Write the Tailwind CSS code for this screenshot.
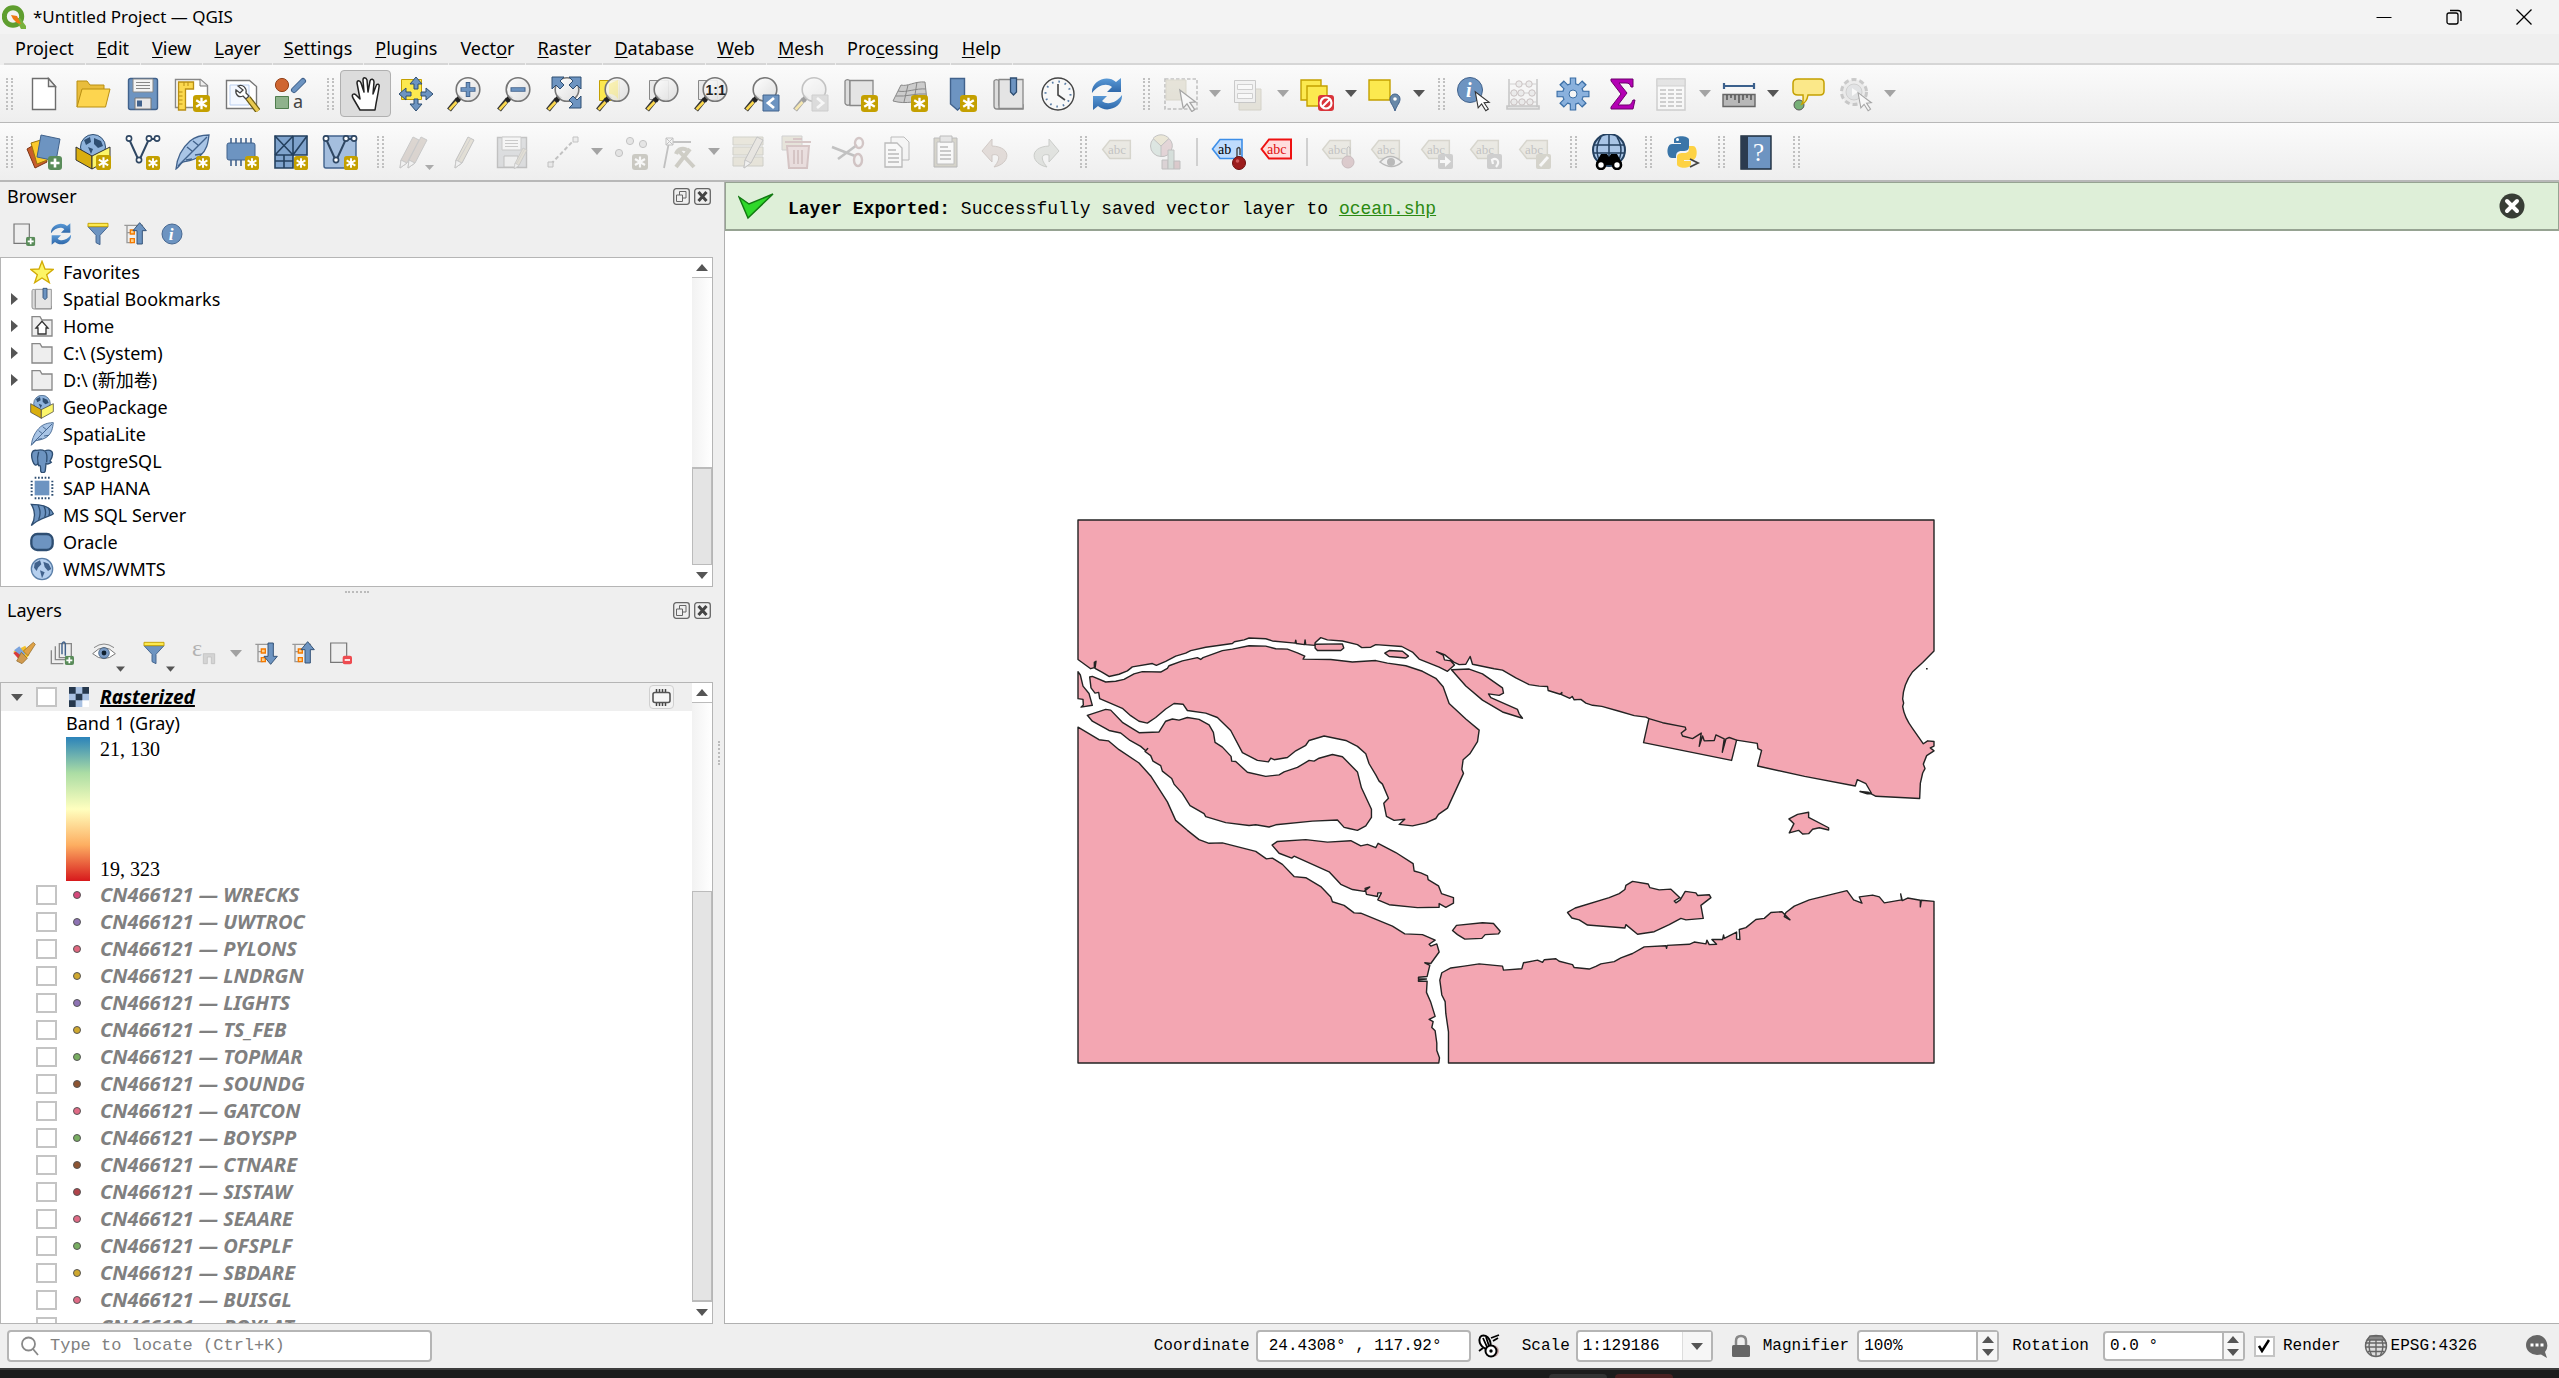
<!DOCTYPE html>
<html lang="en">
<head>
<meta charset="utf-8">
<title>*Untitled Project — QGIS</title>
<script src="https://cdn.jsdelivr.net/npm/@tailwindcss/browser@4"></script>
</head>
<body class="h-screen flex flex-col overflow-hidden bg-[#efefef] text-black text-[18px] leading-6 font-['Noto_Sans','Noto_Sans_CJK_SC',sans-serif]">

<!-- Shared icon shapes, drawn on a 36 by 36 grid -->
<svg class="absolute w-0 h-0" aria-hidden="true">
<defs>
<linearGradient id="gLens" x1="0" y1="0" x2="1" y2="1"><stop offset="0" stop-color="#fff"/><stop offset="1" stop-color="#dcdcdc"/></linearGradient>
<linearGradient id="gRamp" x1="0" y1="0" x2="0" y2="1"><stop offset="0" stop-color="#5b9bd8"/><stop offset="1" stop-color="#2d66a8"/></linearGradient>
<symbol id="badge" viewBox="0 0 16 16"><rect width="16" height="16" rx="3" fill="#c4a000"/><path d="M8 2.500V13.500M3 5l10 6M13 5L3 11" stroke="#fff" stroke-width="2.200"/></symbol>
<symbol id="plus" viewBox="0 0 14 14"><rect width="14" height="14" rx="3" fill="#5a8c5a"/><path d="M7 2.500v9M2.500 7h9" stroke="#fff" stroke-width="2.600"/></symbol>
<symbol id="lens" viewBox="0 0 36 36"><path d="M11 23L2 34" stroke="#333" stroke-width="5"/><path d="M9.500 26L2.500 33.500" stroke="#fcd94f" stroke-width="2.600"/><path d="M14 20l-4 5" stroke="#222" stroke-width="5"/><circle cx="21" cy="13.500" r="11.800" fill="url(#gLens)" fill-opacity=".9" stroke="#777" stroke-width="1.600"/></symbol>
<symbol id="cursor" viewBox="0 0 20 26"><path d="M2 2l3.500 19 4-4.500 5 8 3-2-5-7.500 6-.5z" fill="#fff" stroke="#333" stroke-width="1.300"/></symbol>
<symbol id="tag" viewBox="0 0 32 22"><path d="M1.500 11L9 1.500h21.500v19H9z" fill="#d9d6c8" stroke="#aaa793" stroke-width="1.500"/></symbol>

<symbol id="new" viewBox="0 0 36 36"><path d="M6.500 2.500h16l7 8v23h-23z" fill="#fff" stroke="#6d6d6d" stroke-width="1.400"/><path d="M22.500 2.500v8h7z" fill="#eee" stroke="#6d6d6d" stroke-width="1.400"/></symbol>
<symbol id="open" viewBox="0 0 36 36"><path d="M2 31V5h10l3 4h14v5" fill="#e9bd3c" stroke="#b98f13"/><path d="M2 31L7 13h28l-4.500 18z" fill="#fdd54f" stroke="#b98f13"/></symbol>
<symbol id="save" viewBox="0 0 36 36"><path d="M3.500 4.500a2 2 0 012-2h25a2 2 0 012 2v27a2 2 0 01-2 2h-25a2 2 0 01-2-2z" fill="#6d94c1" stroke="#41628c" stroke-width="1.400"/><path d="M8 3h20v13H8z" fill="#f4f4f4" stroke="#888"/><path d="M11 6.500h14M11 9.500h14M11 12.500h14" stroke="#888"/><path d="M10 22h16v11H10z" fill="#e8e8e8" stroke="#777"/><path d="M12 24.500h5v6h-5z" fill="#41628c"/></symbol>
<symbol id="layout" viewBox="0 0 36 36"><path d="M1.500 3.500h25l7 6v22h-32z" fill="#fff" stroke="#888" stroke-width="1.400"/><path d="M26 3.500v6.500h7" fill="#eee" stroke="#777"/><path d="M4.500 6h15v7h-8v21h-7z" fill="#fcd94f" stroke="#b98f13" stroke-width="1.300"/><path d="M4.500 16h4M4.500 20h4M4.500 24h4M4.500 28h4M10 6v4M14 6v4" stroke="#b98f13"/><use href="#badge" x="19" y="19" width="17" height="17"/></symbol>
<symbol id="layoutmgr" viewBox="0 0 36 36"><path d="M2.500 4.500h23l7 6v22h-30z" fill="#fff" stroke="#777" stroke-width="1.400"/><path d="M6 9h19v20H6z" fill="#f4f8ff" stroke="#bcd0f0"/><path d="M14 10c5-2 9 2 8 7l3 3-3 3-3-3c-4 2-8-1-7-6l4 3 3-3z" fill="#fff" stroke="#444" stroke-width="1.300"/><path d="M24 22l10 13" stroke="#6b5a12" stroke-width="6"/><path d="M24 22l10 13" stroke="#e8c850" stroke-width="3.600"/></symbol>
<symbol id="style" viewBox="0 0 36 36"><circle cx="9" cy="9" r="6.600" fill="#cf6530" stroke="#94431c"/><path d="M21 14L30 5" stroke="#41628c" stroke-width="6" stroke-linecap="round"/><path d="M21 14L30 5" stroke="#6d94c1" stroke-width="4" stroke-linecap="round"/><path d="M2.500 20.500h13v12h-13z" fill="#8fb28c" stroke="#4f7d4d"/><text x="20" y="32" font-size="18" font-family="Noto Sans" fill="#444">a</text></symbol>
<symbol id="hand" viewBox="0 0 36 36"><path d="M12 34L5 22c-2-4 1-5 3-3l4 4L9 7c0-3 3-3 4 0l3 9-1-12c0-3 3-3 4 0l1 12 2-11c1-3 4-2 4 1l-1 12 3-8c1-3 4-2 3 1-1 8-2 10-4 23z" fill="#fff" stroke="#222" stroke-width="1.500" stroke-linejoin="round"/></symbol>
<symbol id="panarrows" viewBox="0 0 36 36"><path d="M3.500 3.500h20v20h-20z" fill="#fce94f" stroke="#c4a000"/><path d="M18 1l6 7h-4v5h-4V8h-4zM18 35l6-7h-4v-5h-4v5h-4zM1 18l7-6v4h5v4H8v4zM35 18l-7-6v4h-5v4h5v4z" fill="#6d94c1" stroke="#2e4e72" stroke-linejoin="round"/></symbol>
<symbol id="zin" viewBox="0 0 36 36"><use href="#lens"/><path d="M21 6v15M13.500 13.500h15" stroke="#41628c" stroke-width="4.500"/><path d="M21 7v13M14.500 13.500h13" stroke="#6d94c1" stroke-width="2.800"/></symbol>
<symbol id="zout" viewBox="0 0 36 36"><use href="#lens"/><path d="M13.500 13.500h15" stroke="#41628c" stroke-width="4.500"/><path d="M14.500 13.500h13" stroke="#6d94c1" stroke-width="2.800"/></symbol>
<symbol id="zfull" viewBox="0 0 36 36"><use href="#lens"/><path d="M6 1h12l-4 4 4 4-4 4-4-4-4 4zM35 1v12l-4-4-4 4-4-4 4-4-4-4zM35 32H23l4-4-4-4 4-4 4 4 4-4z" fill="#6d94c1" stroke="#2e4e72"/></symbol>
<symbol id="zsel" viewBox="0 0 36 36"><path d="M3.500 4.500h20v20h-20z" fill="#fce94f" stroke="#c4a000"/><use href="#lens"/><path d="M22 4v19A10 10 0 0013 18V8z" fill="#fce94f" opacity=".35"/></symbol>
<symbol id="zlayer" viewBox="0 0 36 36"><path d="M4.500 4.500h19v19h-19z" fill="#e8e8e8" stroke="#888"/><use href="#lens"/></symbol>
<symbol id="z11" viewBox="0 0 36 36"><path d="M4.500 4.500h19v19h-19z" fill="#e8e8e8" stroke="#888"/><use href="#lens"/><text x="11.500" y="19" font-size="14" font-weight="bold" font-family="Liberation Sans" fill="#222">1:1</text></symbol>
<symbol id="zlast" viewBox="0 0 36 36"><use href="#lens"/><path d="M19 19h16v16H19z" fill="#6d94c1" stroke="#41628c"/><path d="M30 22l-6 5 6 5" fill="none" stroke="#fff" stroke-width="2.800"/></symbol>
<symbol id="znext" viewBox="0 0 36 36"><use href="#lens"/><path d="M19 19h16v16H19z" fill="#bbb" stroke="#999"/><path d="M24 22l6 5-6 5" fill="none" stroke="#fff" stroke-width="2.800"/></symbol>
<symbol id="map2d" viewBox="0 0 36 36"><path d="M3 5a3 3 0 015 0v24h-1a3 3 0 01-4-2z" fill="#ddd" stroke="#888" stroke-width="1.300"/><path d="M8 4.500h23v25H8z" fill="#e4e4e4" stroke="#888" stroke-width="1.300"/><use href="#badge" x="19" y="19" width="17" height="17"/></symbol>
<symbol id="map3d" viewBox="0 0 36 36"><path d="M9 9c6 2 14-4 24-3l2 19c-10-1-20 4-34 0z" fill="#ccc" stroke="#888"/><path d="M6 15c8 2 18-3 28-2M4 20c10 1 20-3 30-2M16 9L12 26M25 6l-3 19" stroke="#888" fill="none"/><use href="#badge" x="19" y="19" width="17" height="17"/></symbol>
<symbol id="bmnew" viewBox="0 0 36 36"><path d="M9.500 2.500h14V28l-7 6-7-6z" fill="#6d94c1" stroke="#41628c" stroke-width="1.400"/><use href="#badge" x="19" y="19" width="17" height="17"/></symbol>
<symbol id="bm" viewBox="0 0 36 36"><path d="M3 5a3 3 0 015 0v24h24v4H6a3 3 0 01-3-3z" fill="#ddd" stroke="#888" stroke-width="1.300"/><path d="M8 3.500h24v29H8z" fill="#e4e4e4" stroke="#888" stroke-width="1.300"/><path d="M19.500 2h6v14l-3 3-3-3z" fill="#6d94c1" stroke="#2e4e72" stroke-width="1.300"/></symbol>
<symbol id="clock" viewBox="0 0 36 36"><circle cx="18" cy="18" r="16" fill="#f8f8f8" stroke="#444" stroke-width="1.400"/><circle cx="18" cy="18" r="12.500" fill="none" stroke="#5b7fa8" stroke-width="2" stroke-dasharray="1.600 4.945"/><path d="M18 8v11l7 5" fill="none" stroke="#444" stroke-width="1.600"/></symbol>
<symbol id="refresh" viewBox="0 0 36 36"><path d="M3 17C2 5 18-2 27 6l5-4v14H18l5-5c-6-5-15-1-20 6z" fill="url(#gRamp)"/><path d="M33 19c1 12-15 19-24 11l-5 4V20h14l-5 5c6 5 15 1 20-6z" fill="url(#gRamp)"/></symbol>
<symbol id="select" viewBox="0 0 36 36"><path d="M2 3h32v30H2z" fill="none" stroke="#777" stroke-width="1.600" stroke-dasharray="3.500 2"/><path d="M3 4h20v20H3z" fill="#cdc7ae" stroke="#b3ad93"/><use href="#cursor" x="14" y="12" width="21" height="25"/></symbol>
<symbol id="selform" viewBox="0 0 36 36"><path d="M8 13h22v21H8z" fill="#cfcab4" stroke="#a9a48e"/><path d="M3.500 4.500h21v22h-21z" fill="#eee" stroke="#888"/><path d="M6.500 8.500h15v5h-15zM6.500 17.500h15v5h-15z" fill="#fff" stroke="#999"/></symbol>
<symbol id="desel" viewBox="0 0 36 36"><path d="M2 4h20v20H2z" fill="#fce94f" stroke="#c4a000" stroke-width="1.400"/><path d="M8 10h20v20H8z" fill="#fce94f" stroke="#c4a000" stroke-width="1.400"/><rect x="19" y="19" width="16" height="16" rx="3" fill="#d9343a"/><circle cx="27" cy="27" r="5.500" fill="none" stroke="#fff" stroke-width="2.200"/><path d="M23.500 30.500l7-7" stroke="#fff" stroke-width="2.200"/></symbol>
<symbol id="selloc" viewBox="0 0 36 36"><path d="M2 4h21v20H2z" fill="#fce94f" stroke="#c4a000" stroke-width="1.400"/><path d="M28 35c-2-6-5-8-5-12a5 5 0 0110 0c0 4-3 6-5 12z" fill="#6888a8" stroke="#41628c"/><circle cx="28" cy="23" r="1.800" fill="#fff"/></symbol>
<symbol id="ident" viewBox="0 0 36 36"><circle cx="14" cy="14" r="12.500" fill="#6d94c1" stroke="#41628c"/><text x="10" y="21" font-size="20" font-style="italic" font-weight="bold" font-family="Liberation Serif" fill="#fff">i</text><use href="#cursor" x="17" y="14" width="18" height="22"/></symbol>
<symbol id="abacus" viewBox="0 0 36 36"><path d="M4 3v28M32 3v28M2 33h32v-3H2z" stroke="#888" stroke-width="1.600" fill="#ccc"/><path d="M4 8h28M4 17h28M4 26h28" stroke="#999"/><g fill="#ddd" stroke="#8b7777"><circle cx="14" cy="8" r="3.200"/><circle cx="24" cy="8" r="3.200"/><circle cx="9" cy="17" r="3.200"/><circle cx="16" cy="17" r="3.200"/><circle cx="27" cy="17" r="3.200"/><circle cx="9" cy="26" r="3.200"/><circle cx="17" cy="26" r="3.200"/><circle cx="25" cy="26" r="3.200"/></g></symbol>
<symbol id="gear" viewBox="0 0 36 36"><g stroke="#3a6ea5" stroke-width="6.500"><path d="M18 1.500v33M1.500 18h33M6.500 6.500l23 23M29.500 6.500l-23 23"/></g><circle cx="18" cy="18" r="11" fill="#3a6ea5"/><g stroke="#8ab1dd" stroke-width="4.300"><path d="M18 2.600v30.800M2.600 18h30.800M7.500 7.500l21 21M28.500 7.500l-21 21"/></g><circle cx="18" cy="18" r="9.900" fill="#8ab1dd"/><circle cx="18" cy="18" r="4" fill="#f5f5f5" stroke="#3a6ea5"/></symbol>
<symbol id="sigma" viewBox="0 0 36 36"><path d="M7 3h22v8h-2c-1-3-2-4-5-4h-7l8 10-9 12h9c4 0 4-1 6-5h2l-2 9H7v-2l10-13L7 5z" fill="#b400b4" stroke="#6d006d"/></symbol>
<symbol id="table" viewBox="0 0 36 36"><path d="M4 3h28v31H4z" fill="#fff" stroke="#999" stroke-width="1.500"/><path d="M4 3h28v7H4z" fill="#c9c9c9" stroke="#999"/><path d="M7 14h6M15 14h6M23 14h6M7 18h6M15 18h6M23 18h6M7 22h6M15 22h6M23 22h6M7 26h6M15 26h6M23 26h6M7 30h6M15 30h6M23 30h6" stroke="#999" stroke-width="1.800"/></symbol>
<symbol id="ruler" viewBox="0 0 36 36"><path d="M3 10h30M3 7v6M33 7v6" stroke="#3b608c" stroke-width="2.200"/><path d="M2 18.500h32v12H2z" fill="#b8b8b8" stroke="#666" stroke-width="1.400"/><path d="M6 19v5M10 19v3M14 19v5M18 19v8M22 19v5M26 19v3M30 19v5" stroke="#444" stroke-width="1.300"/></symbol>
<symbol id="tip" viewBox="0 0 36 36"><circle cx="9" cy="29" r="5" fill="#78b078" stroke="#555"/><path d="M8 3h22q4 0 4 4v8q0 4-4 4H18c-1 6-3 8-6 9 2-3 1-6 1-9H8q-5 0-5-4V7q0-4 5-4z" fill="#fbe889" stroke="#c4a000" stroke-width="1.500"/></symbol>
<symbol id="gearplay" viewBox="0 0 36 36"><circle cx="16" cy="16" r="12.500" fill="#ddd" stroke="#888" stroke-width="3" stroke-dasharray="5 3"/><circle cx="16" cy="16" r="8" fill="#c5c9cc" stroke="#999"/><path d="M14 12l6 4-6 4z" fill="#fff"/><use href="#cursor" x="18" y="15" width="17" height="21"/></symbol>

<symbol id="dsm" viewBox="0 0 36 36"><path d="M1 15L13 8l8 20-12 6z" fill="#c95d2c" stroke="#7c3412"/><path d="M5 9l13-4 6 20-13 5z" fill="#fcca2c" stroke="#9a7409"/><path d="M15 1l19 4-4 22-19-4z" fill="#6d94c1" stroke="#41628c"/><use href="#plus" x="22" y="22" width="14" height="14"/></symbol>
<symbol id="gpkg" viewBox="0 0 36 36"><circle cx="18" cy="13" r="12.500" fill="#8fb3dc" stroke="#2e4e72"/><path d="M9 6l6-3 1 5-5 3zM19 4l7 3 2 5-5 2-4-4zM13 13l5 2-2 5z" fill="#2e4e72"/><path d="M1 13l16 9v13L1 26z" fill="#d9ae0e" stroke="#333" stroke-linejoin="round"/><path d="M35 13l-18 9v13l18-10z" fill="#fcf56a" stroke="#333" stroke-linejoin="round"/></symbol>
<symbol id="gpkgnew" viewBox="0 0 36 36"><use href="#gpkg"/><use href="#badge" x="21" y="21" width="15" height="15"/></symbol>
<symbol id="shp" viewBox="0 0 36 36"><path d="M4 5l10 22L24 5h8" fill="none" stroke="#2f4763" stroke-width="2"/><g fill="#fff" stroke="#2f4763" stroke-width="1.600"><circle cx="4" cy="4.500" r="2.600"/><circle cx="14" cy="26" r="2.600"/><circle cx="24" cy="4.500" r="2.600"/><circle cx="32" cy="4.500" r="2.600"/></g></symbol>
<symbol id="shpnew" viewBox="0 0 36 36"><use href="#shp"/><use href="#badge" x="21" y="22" width="14" height="14"/></symbol>
<symbol id="feather" viewBox="0 0 36 36"><path d="M2 35C3 24 8 14 16 7 22 2 30 1 35 1c-1 8-2 15-9 21-5 4-12 5-17 6-3 2-4 5-7 7z" fill="#a9c5e6" stroke="#41628c" stroke-width="1.300"/><path d="M4 32L33 3M13 13l5 4M19 7l5 4M12 26l6-1M21 21l7-1" stroke="#41628c" stroke-width="1.400" fill="none"/></symbol>
<symbol id="feathernew" viewBox="0 0 36 36"><use href="#feather"/><use href="#badge" x="22" y="22" width="14" height="14"/></symbol>
<symbol id="chip" viewBox="0 0 36 36"><path d="M8 4v28M13 4v28M18 4v28M23 4v28M28 4v28" stroke="#41628c" stroke-width="1.600"/><rect x="4" y="9" width="28" height="17" rx="2" fill="#6d94c1" stroke="#41628c"/></symbol>
<symbol id="chipnew" viewBox="0 0 36 36"><use href="#chip"/><use href="#badge" x="22" y="22" width="14" height="14"/></symbol>
<symbol id="mesh" viewBox="0 0 36 36"><path d="M2 2h32v19H20v13H2z" fill="#7fa3cd" stroke="#24405f" stroke-width="1.600"/><path d="M2 21h18V2M2 2l18 19M20 2L2 21M20 21L34 2M2 27h18M11 21v13" fill="none" stroke="#24405f" stroke-width="1.600"/><use href="#badge" x="21" y="22" width="14" height="14"/></symbol>
<symbol id="virt" viewBox="0 0 36 36"><rect x="2" y="2" width="32" height="32" rx="2" fill="#a4bede" stroke="#41628c" stroke-width="1.400"/><use href="#shp"/><use href="#badge" x="22" y="22" width="14" height="14"/></symbol>
<symbol id="pencil" viewBox="0 0 36 36"><path d="M8 34l1-8L21 3l6 3-12 23z" fill="#c8bfa8" stroke="#777"/><path d="M24 4L11 27" stroke="#999"/><path d="M8 34l1-8 6 3z" fill="#eee" stroke="#888"/></symbol>
<symbol id="pencils" viewBox="0 0 36 36"><path d="M2 34l1-8L15 3l6 3L9 29z" fill="#b5a59a" stroke="#888"/><path d="M10 34l1-8L23 3l6 3-12 23z" fill="#b5a59a" stroke="#888"/><path d="M2 34l1-8 6 3zM10 34l1-8 6 3z" fill="#eee" stroke="#888"/><path d="M27 31h9l-4.500 5z" fill="#444"/></symbol>
<symbol id="savedit" viewBox="0 0 36 36"><path d="M1.500 3.500h29v30h-29z" fill="#b9bcc0" stroke="#777" stroke-width="1.400"/><path d="M6 3h19v13H6z" fill="#f4f4f4" stroke="#888"/><path d="M9 6.500h13M9 9.500h13M9 12.500h13" stroke="#888"/><path d="M8 22h14v11H8z" fill="#e8e8e8" stroke="#777"/><use href="#pencil" x="13" y="12" width="24" height="24"/></symbol>
<symbol id="line" viewBox="0 0 36 36"><path d="M6 30L30 5" stroke="#777" stroke-width="2" stroke-dasharray="4 2.500"/><path d="M3 28h5v5H3zM28 3h5v5h-5z" fill="#ddd" stroke="#777"/></symbol>
<symbol id="pts" viewBox="0 0 36 36"><g fill="#ccc" stroke="#777"><circle cx="5" cy="19" r="3.600"/><circle cx="16" cy="7" r="3.600"/><circle cx="29" cy="10" r="3.600"/></g><rect x="18" y="20" width="16" height="16" rx="3" fill="#8f8c7c"/><path d="M26 22.500v11M21 25l10 6M31 25l-10 6" stroke="#fff" stroke-width="2.200"/></symbol>
<symbol id="vertex" viewBox="0 0 36 36"><path d="M2 34L7 8h22" fill="none" stroke="#777" stroke-width="1.800"/><path d="M4 4h7v7H4zM4 4l7 7M11 4l-7 7" fill="#eee" stroke="#777"/><path d="M14 33l14-18M16 16l16 17" stroke="#999683" stroke-width="4"/><path d="M14 20c2-6 8-6 11-4" fill="none" stroke="#999683" stroke-width="4"/></symbol>
<symbol id="modattr" viewBox="0 0 36 36"><path d="M2 3h30v8H2zM2 13h30v8H2zM2 23h30v9H2z" fill="#d5cfb6" stroke="#9b9b8b"/><path d="M13 34l1-8L26 3l6 3-12 23z" fill="#d5cfc5" stroke="#777"/><path d="M13 34l1-8 6 3z" fill="#eee" stroke="#888"/></symbol>
<symbol id="del" viewBox="0 0 36 36"><path d="M2 2h20v14H2z" fill="#cfc9b2" stroke="#999"/><path d="M7 12h22l-2 22H9z" fill="#dcc0c0" stroke="#a98080" stroke-width="2"/><path d="M5 8h26M13 5h9M14 16v14M18 16v14M22 16v14" stroke="#a98080" stroke-width="2"/></symbol>
<symbol id="cut" viewBox="0 0 36 36"><path d="M2 13l23 9M8 25L27 11" stroke="#777" stroke-width="2.500"/><ellipse cx="29" cy="9" rx="4" ry="5" fill="none" stroke="#a08080" stroke-width="2.400"/><ellipse cx="28" cy="26" rx="4" ry="6" fill="none" stroke="#a08080" stroke-width="2.400"/></symbol>
<symbol id="copy" viewBox="0 0 36 36"><path d="M12 3h13l5 5v18H12z" fill="#f4f4f4" stroke="#666"/><path d="M6 9h12l5 5v19H6z" fill="#fff" stroke="#666" stroke-width="1.300"/><path d="M9 16h8M9 20h11M9 24h11M9 28h11" stroke="#666" stroke-width="1.500"/></symbol>
<symbol id="paste" viewBox="0 0 36 36"><path d="M6 4h23v29H6z" fill="#aaa58f" stroke="#666"/><path d="M9 8h17v22H9z" fill="#fff" stroke="#777"/><path d="M12 2h12v6H12z" fill="#ccc" stroke="#666"/><path d="M12 13h8M12 17h11M12 21h11M12 25h11" stroke="#666" stroke-width="1.500"/></symbol>
<symbol id="undo" viewBox="0 0 36 36"><path d="M14 5L4 17l10 11v-7c8-2 9 4 2 12 16-3 19-20-2-21z" fill="#c8b8b0" stroke="#9b8a82"/></symbol>
<symbol id="redo" viewBox="0 0 36 36"><path d="M22 5l10 12-10 11v-7c-8-2-9 4-2 12C4 30 1 13 22 12z" fill="#c5c9c2" stroke="#8d928a"/></symbol>
<symbol id="lab" viewBox="0 0 36 36"><use href="#tag" x="2" y="5" width="31" height="21"/><text x="9" y="20" font-size="13" font-family="Liberation Serif" fill="#777">abc</text></symbol>
<symbol id="diag" viewBox="0 0 36 36"><circle cx="13" cy="12" r="10.500" fill="#b9cfc5" stroke="#777"/><path d="M13 12L5 4.500a10.500 10.500 0 0116 0z" fill="#d8cfa8" stroke="#777"/><path d="M13 12l8-7.500a10.500 10.500 0 01-8 18z" fill="#c9a4aa" stroke="#777"/><path d="M14 26h6v9h-6z" fill="#b9a4aa" stroke="#777"/><path d="M20 16h6v19h-6z" fill="#a9bfb5" stroke="#777"/><path d="M26 27h6v8h-6z" fill="#b98f95" stroke="#777"/></symbol>
<symbol id="labpin" viewBox="0 0 36 36"><path d="M2.500 15L10 5.500h22v19H10z" fill="#bfdcfd" stroke="#3d8ee8" stroke-width="1.600"/><text x="8" y="20" font-size="14" font-family="Liberation Serif">ab</text><path d="M27 26V15q2-3 3 0v6" fill="none" stroke="#444" stroke-width="1.400"/><circle cx="29" cy="29" r="6.500" fill="#9c1c1c" stroke="#6b0f0f"/><circle cx="27.500" cy="27" r="1.800" fill="#d05a5a"/></symbol>
<symbol id="labred" viewBox="0 0 36 36"><path d="M2.500 15L10 5.500h22v19H10z" fill="#fdd" stroke="#ee1111" stroke-width="2"/><text x="8" y="20" font-size="14" font-family="Liberation Serif" fill="#e01010">abc</text></symbol>
<symbol id="labpin2" viewBox="0 0 36 36"><use href="#lab"/><circle cx="29" cy="28" r="6" fill="#b98f95" stroke="#8b6a70"/><path d="M28 22v-8q2-3 3 0v6" fill="none" stroke="#777"/></symbol>
<symbol id="labeye" viewBox="0 0 36 36"><use href="#lab"/><path d="M12 28q10-11 22 0-10 9-22 0z" fill="#eee" stroke="#666" stroke-width="1.500"/><circle cx="23" cy="28" r="4" fill="#666"/></symbol>
<symbol id="labmove" viewBox="0 0 36 36"><use href="#lab"/><rect x="20" y="20" width="15" height="15" rx="2" fill="#999"/><path d="M22 26h5v-4l6 5.500-6 5.500v-4h-5z" fill="#fff"/></symbol>
<symbol id="labrot" viewBox="0 0 36 36"><use href="#lab"/><rect x="20" y="20" width="15" height="15" rx="2" fill="#999"/><path d="M29 33c5-6 0-10-4-7l1 4" fill="none" stroke="#fff" stroke-width="2.200"/></symbol>
<symbol id="labedit" viewBox="0 0 36 36"><use href="#lab"/><rect x="20" y="20" width="15" height="15" rx="2" fill="#aaa793"/><path d="M24 32l8-9" stroke="#fff" stroke-width="3"/></symbol>
<symbol id="search" viewBox="0 0 36 36"><circle cx="18" cy="16" r="16" fill="#a9c5e6" stroke="#24405f" stroke-width="2"/><path d="M3 11h30M2 19h32M18 1v32M10 3c-5 8-5 18 0 27M26 3c5 8 5 18 0 27" stroke="#24405f" fill="none" stroke-width="1.500"/><path d="M10 20h6l2 3 2-3h6l5 9-9 2h-8l-9-2z" fill="#000"/><circle cx="10" cy="31" r="4" fill="#fff" stroke="#000" stroke-width="2.600"/><circle cx="26" cy="31" r="4" fill="#fff" stroke="#000" stroke-width="2.600"/></symbol>
<symbol id="python" viewBox="0 0 36 36"><path d="M9 9V6c0-5 15-5 15 0v7c0 4-4 4-7 4-5 0-6 2-6 7H7c-6 0-6-14 0-14h9V9z" fill="#3a75a8"/><path d="M24 12h4c5 0 5 13 0 14h-9v1h7v3c0 5-14 5-14 0v-7c0-4 4-4 7-4 5 0 5-2 5-7z" fill="#fdd244"/><circle cx="12.500" cy="5.500" r="1.500" fill="#fff"/><path d="M25 25l8 4-8 4" fill="none" stroke="#444" stroke-width="1.800"/></symbol>
<symbol id="help" viewBox="0 0 36 36"><path d="M3 2h30v33H3z" fill="#6d94c1" stroke="#1c2c3c" stroke-width="1.400"/><path d="M3 2h7v33H3z" fill="#2b3b4f"/><text x="15" y="27" font-size="25" font-family="Liberation Serif" fill="#fff">?</text></symbol>

<symbol id="addlayer" viewBox="0 0 36 36"><path d="M3 3h23v29H3z" fill="#eee" stroke="#777" stroke-width="1.800"/><use href="#plus" x="21" y="22" width="14" height="14"/></symbol>
<symbol id="filter" viewBox="0 0 36 36"><path d="M3 7h30L21 20v14l-6-3V20z" fill="#6d94c1" stroke="#41628c" stroke-width="1.400"/><path d="M3 2h30v5H3z" fill="#fce94f" stroke="#c4a000" stroke-width="1.400"/></symbol>
<symbol id="collapse" viewBox="0 0 36 36"><path d="M2 5h28M6 5v26h8M6 16h6" fill="none" stroke="#999" stroke-width="2"/><path d="M11 12h6v6h-6zM11 25h6v6h-6z" fill="#fcd08a" stroke="#f57900" stroke-width="2"/><path d="M25 1l10 12h-6v20h-8V13h-6z" fill="#6d94c1" stroke="#2e4e72" stroke-width="1.400"/></symbol>
<symbol id="expand" viewBox="0 0 36 36"><path d="M2 5h28M6 5v26h8M6 16h6" fill="none" stroke="#999" stroke-width="2"/><path d="M11 12h6v6h-6zM11 25h6v6h-6z" fill="#fcd08a" stroke="#f57900" stroke-width="2"/><path d="M25 35l10-12h-6V3h-8v20h-6z" fill="#6d94c1" stroke="#2e4e72" stroke-width="1.400"/></symbol>
<symbol id="info" viewBox="0 0 36 36"><circle cx="18" cy="18" r="15" fill="#6d94c1" stroke="#41628c" stroke-width="1.400"/><text x="13" y="27" font-size="26" font-style="italic" font-weight="bold" font-family="Liberation Serif" fill="#fff">i</text></symbol>
<symbol id="star" viewBox="0 0 36 36"><path d="M18 2l4.500 11.500L35 14l-10 8 4 12-11-7-11 7 4-12-10-8 12.500-.5z" fill="#fdf565" stroke="#d2ab05" stroke-width="2"/></symbol>
<symbol id="home" viewBox="0 0 36 36"><path d="M3 4h12l3 5h15v24H3z" fill="#eee" stroke="#888" stroke-width="2"/><path d="M9 21l9-10 9 10h-3v9H12v-9z" fill="#fff" stroke="#333" stroke-width="2"/></symbol>
<symbol id="folder" viewBox="0 0 36 36"><path d="M3 4h12l3 5h15v24H3z" fill="#eee" stroke="#888" stroke-width="2"/></symbol>
<symbol id="pg" viewBox="0 0 36 36"><path d="M10 2C2 1 1 9 4 18c2 6 5 8 8 4l1 3c3-1 3 2 3 8 1 4 7 3 7-1l1-10c3 1 6 0 8-2l-2-2c4-6 6-14 0-16-4-1-6 0-8 1-3-2-8-2-12-1z" fill="#6d94c1" stroke="#2e4e72" stroke-width="2"/><path d="M13 4c-2 6-2 12-1 18M23 4c4 5 2 11 2 16" fill="none" stroke="#2e4e72" stroke-width="2"/></symbol>
<symbol id="hana" viewBox="0 0 36 36"><path d="M7 7h22v22H7z" fill="#6d94c1"/><path d="M7 2.500h23M7 33.500h23M2.500 7v23M33.500 7v23" stroke="#2e4e72" stroke-width="3" stroke-dasharray="2.500 2.500"/></symbol>
<symbol id="mssql" viewBox="0 0 36 36"><path d="M2 2c14 0 28 2 33 14-6 5-22 6-33 18C9 22 8 12 2 2z" fill="#6d94c1" stroke="#2e4e72" stroke-width="2"/><path d="M12 3c4 8 4 15 1 22M21 5c3 6 3 11 1 16M28 8c2 5 2 8 0 11" fill="none" stroke="#2e4e72" stroke-width="2"/></symbol>
<symbol id="oracle" viewBox="0 0 36 36"><rect x="2" y="6" width="32" height="24" rx="9" fill="#6d94c1" stroke="#2e4e72" stroke-width="3.500"/></symbol>
<symbol id="wms" viewBox="0 0 36 36"><circle cx="18" cy="18" r="16" fill="#b5cfee" stroke="#5b7fa8" stroke-width="2"/><path d="M7 9l8-4 2 6-5 5-2 5-4-5zM20 7l8 3 4 8-5 3-5-6zM15 20l7 3-4 9z" fill="#41628c"/></symbol>
<symbol id="brush" viewBox="0 0 36 36"><path d="M2 16l18-9 6 14-10 12z" fill="#f3c12c"/><path d="M2 18l12 14 6-6-10-12z" fill="#d83a3a"/><path d="M3 14l8-6 9 12-5 3z" fill="#7ca4dd"/><path d="M14 17l9 9-8 8-8-4z" fill="#d09a50" stroke="#8b6423"/><path d="M17 15l7 7 11-17-3-3z" fill="#e0a347" stroke="#8b6423"/></symbol>
<symbol id="group" viewBox="0 0 36 36"><path d="M2 14v20h18M8 8v20h18" fill="none" stroke="#888" stroke-width="2"/><path d="M14 4h18v21H14z" fill="#eee" stroke="#888" stroke-width="2"/><path d="M18 20V4q3-5 5 0v18" fill="none" stroke="#41628c" stroke-width="2.200"/><use href="#plus" x="22" y="22" width="14" height="14"/></symbol>
<symbol id="eye" viewBox="0 0 36 36"><path d="M1 19Q18 1 35 19 18 34 1 19z" fill="#fff" stroke="#777" stroke-width="1.500"/><path d="M3 10Q18-1 33 10" fill="none" stroke="#888" stroke-width="1.500"/><circle cx="18" cy="18" r="8" fill="#7b9bc4" stroke="#2e4e72"/><circle cx="18" cy="18" r="3.600" fill="#10202f"/></symbol>
<symbol id="expr" viewBox="0 0 36 36"><text x="0" y="22" font-size="36" font-family="Liberation Serif" fill="#777">ε</text><path d="M17 19h17v15h-5V24h-6v10h-6z" fill="#bbb" stroke="#888"/></symbol>
<symbol id="remove" viewBox="0 0 36 36"><path d="M4 3h24v29H4z" fill="#eee" stroke="#777" stroke-width="1.800"/><rect x="22" y="22" width="14" height="13" rx="3" fill="#ee4b50"/><path d="M25 28.500h8" stroke="#fff" stroke-width="2.500"/></symbol>
</defs>
</svg>

<header class="h-[34px] shrink-0 flex items-center bg-[#f3f3f3] pl-[2px]">
  <svg class="w-6 h-6" viewBox="0 0 24 24"><circle cx="11" cy="11.500" r="8.700" fill="none" stroke="#5f9e2f" stroke-width="5"/><path d="M13 13h5l6 8v3h-5z" fill="#79b13c"/><path d="M9 10l6 1 4 8-4-1-4-4z" fill="#ee7913"/></svg>
  <h1 class="pl-[7px] text-[17px] flex-1">*Untitled Project — QGIS</h1>
  <button class="w-[70px] h-full grid place-items-center" aria-label="Minimize"><svg class="w-4 h-4" viewBox="0 0 16 16"><path d="M.5 8.500h15" stroke="#000"/></svg></button>
  <button class="w-[70px] h-full grid place-items-center" aria-label="Restore"><svg class="w-4 h-4" viewBox="0 0 16 16" fill="none" stroke="#000" stroke-width="1.300"><rect x="1" y="4" width="11" height="11" rx="2"/><path d="M4 1.500h8q3 0 3 3V12"/></svg></button>
  <button class="w-[70px] h-full grid place-items-center" aria-label="Close"><svg class="w-4 h-4" viewBox="0 0 16 16"><path d="M.5 .5l15 15M15.500 .5l-15 15" stroke="#000" stroke-width="1.300"/></svg></button>
</header>

<nav id="menu" class="h-[31px] shrink-0 flex gap-px pl-1"></nav>

<div id="bar1" class="h-[58px] shrink-0 flex bg-linear-to-b from-[#fbfbfb] to-[#eeeeee] border-b border-[#b8b8b8]" role="toolbar"></div>
<div id="bar2" class="h-[59px] shrink-0 flex bg-linear-to-b from-[#fbfbfb] to-[#eeeeee] border-b-2 border-[#b8b8b8]" role="toolbar"></div>

<main class="flex-1 min-h-0 flex">
  <aside class="w-[724px] shrink-0 flex">
    <div class="flex-1 flex flex-col min-w-0">
      <section class="h-[405px] shrink-0 flex flex-col">
        <div class="h-7 flex items-center pl-[7px] gap-1" data-title="Browser"></div>
        <div class="h-[47px] flex items-center gap-[13px] pl-3" data-tools="addlayer refresh filter collapse info"></div>
        <div class="flex-1 min-h-0 flex border border-[#b5b5b5] bg-white">
          <ul id="browser" class="flex-1 overflow-hidden"></ul>
          <div class="w-5 flex flex-col bg-linear-to-r from-[#f2f2f2] to-white">
            <button class="h-5 grid place-items-center bg-white border-b border-[#bbb]" aria-label="Scroll up"><svg class="w-3 h-[7px]" viewBox="0 0 12 7"><path d="M0 7h12L6 0z" fill="#555"/></svg></button>
            <div class="flex-1"></div>
            <div class="h-[98px] bg-[#e4e4e4] border border-t-2 border-[#bbb]"></div>
            <button class="h-[21px] grid place-items-center bg-white" aria-label="Scroll down"><svg class="w-3 h-[7px]" viewBox="0 0 12 7"><path d="M0 0h12L6 7z" fill="#555"/></svg></button>
          </div>
        </div>
      </section>
      <div class="h-[9px] shrink-0 flex justify-center items-center"><i class="w-6 border-t-2 border-dotted border-[#bbb]"></i></div>
      <section class="flex-1 min-h-0 flex flex-col">
        <div class="h-7 shrink-0 flex items-center pl-[7px] gap-1" data-title="Layers"></div>
        <div id="layertools" class="h-[58px] shrink-0 flex items-center pl-3"></div>
        <div class="flex-1 min-h-0 flex border border-[#b5b5b5] bg-white">
          <div class="flex-1 overflow-hidden">
            <div class="h-7 flex items-center bg-[#efefef] pl-[10px] pr-[18px]">
              <svg class="w-3 h-[7px] mr-[13px]" viewBox="0 0 12 7"><path d="M0 0h12L6 7z" fill="#555"/></svg>
              <input type="checkbox" aria-label="Rasterized" class="appearance-none w-[21px] h-5 bg-white border-2 border-[#c4c4c4] mr-3">
              <svg class="w-5 h-5 mr-[11px]" viewBox="0 0 3 3"><path d="M0 0h3v3H0z" fill="#a9c1e2"/><path d="M0 0h1v1H0zM2 0h1v1H2zM1 1h1v1H1zM0 2h1v1H0z" fill="#26384d"/><path d="M2 2h1v1H2z" fill="#fff"/></svg>
              <span class="flex-1 text-[19px] font-bold italic underline decoration-2">Rasterized</span>
              <button class="w-[25px] h-6 grid place-items-center border border-[#d0d0d0] rounded-sm bg-[#f3f3f3]" aria-label="Temporary layer"><svg class="w-[19px] h-[17px]" viewBox="0 0 19 17"><path d="M4.500 0v17M7.500 0v17M10.500 0v17M13.500 0v17" stroke="#444" stroke-width="1.500"/><rect x="1" y="3.500" width="17" height="10" rx="2" fill="#f6f6f6" stroke="#555" stroke-width="1.600"/></svg></button>
            </div>
            <p class="pl-[65px] h-[26px]">Band 1 (Gray)</p>
            <div class="flex pl-[65px] h-[144px] gap-[10px] font-['Liberation_Serif',serif] text-[20px]">
              <div class="w-6 bg-[linear-gradient(#2b83ba,#abdda4_25%,#ffffbf_50%,#fdae61_75%,#d7191c)]"></div>
              <div class="flex flex-col justify-between"><span>21, 130</span><span>19, 323</span></div>
            </div>
            <ul id="layers"></ul>
          </div>
          <div class="w-5 flex flex-col bg-linear-to-r from-[#f2f2f2] to-white">
            <button class="h-5 grid place-items-center bg-white border-b border-[#bbb]" aria-label="Scroll up"><svg class="w-3 h-[7px]" viewBox="0 0 12 7"><path d="M0 7h12L6 0z" fill="#555"/></svg></button>
            <div class="h-[188px]"></div>
            <div class="flex-1 bg-[#e4e4e4] border border-b-2 border-[#bbb]"></div>
            <button class="h-[21px] grid place-items-center bg-white" aria-label="Scroll down"><svg class="w-3 h-[7px]" viewBox="0 0 12 7"><path d="M0 0h12L6 7z" fill="#555"/></svg></button>
          </div>
        </div>
      </section>
    </div>
    <div class="w-[11px] flex justify-center items-center"><i class="h-6 border-l-2 border-dotted border-[#bbb]"></i></div>
  </aside>

  <section class="flex-1 min-w-0 flex flex-col bg-white border-l border-b border-[#b0b0b0]">
    <div class="h-[49px] shrink-0 flex items-center bg-[#deefd8] border border-b-2 border-[#96a392] pl-3 pr-[33px] font-['Liberation_Mono',monospace] text-[18px]">
      <svg class="w-9 h-7 mr-[14px]" viewBox="0 0 36 28"><path d="M1 5l10 7L35 2 10 26z" fill="#2fd82a" stroke="#137a13" stroke-width="1.500"/></svg>
      <p class="flex-1 pt-[5px]"><b>Layer Exported:</b> Successfully saved vector layer to <a href="#" class="text-[#2b8a12] underline">ocean.shp</a></p>
      <button aria-label="Close message"><svg class="w-[26px] h-[26px]" viewBox="0 0 26 26"><circle cx="13" cy="13" r="12.500" fill="#383d36"/><path d="M8 8l10 10M18 8L8 18" stroke="#fff" stroke-width="4" stroke-linecap="round"/></svg></button>
    </div>
    <div class="flex-1 min-h-0 pt-[289px] pl-[353px]">
      <svg class="w-[856px] h-[543px] overflow-visible" viewBox="57 56 2567 1468" preserveAspectRatio="none" role="img" aria-label="Map">
        <g fill="#f3a6b2" stroke="#232323" stroke-width="1.400" stroke-linejoin="round">
          <path vector-effect="non-scaling-stroke" d="M57 56H2624V410L2590 441 2560 466Q2532 500 2530 540L2533 551 2530 560Q2535 590 2560 620L2592 661 2605 653 2624 655V667L2613 672 2624 680 2602 693 2592 716 2597 728 2590 740 2583 768 2581 809 2450 803 2426 792 2402 790 2424 796 2436 794 2420 769 2394 758 2388 775 2236 749 2095 721 2107 679 2096 674 2094 660 2032 651 2017 706 1753 658 1769 593 1760 589 1725 585 1680 573 1628 560 1600 557 1580 551 1565 541 1545 542 1539 533 1532 538 1507 528 1508 522 1503 527 1467 517 1465 506 1440 505 1410 501 1370 483 1330 462 1305 458 1240 446 1233 425 1220 446 1200 447 1184 440 1156 420 1132 412 1152 421 1156 434 1175 437 1186 448 1165 465 1140 454 1080 432 1060 413 1028 398 950 393 935 400 908 401 895 393 850 383 805 380 785 374 768 388V395L740 393 738 380 736 393 712 390 710 381 708 389 640 383 620 377 570 375 555 380 526 385 520 390 440 400 395 409 380 416 350 424 320 438 292 449 280 444 220 453 205 464 180 473 150 479 130 468 108 457 111 438 106 441 106 455 95 458 57 433Z"/>
          <path vector-effect="non-scaling-stroke" d="M92 480L100 479 140 494 170 492 195 487 225 472 250 466 305 467 325 457 330 450 370 437 415 428 425 433 432 428 490 409 520 405 570 396 620 397 650 404 685 405 715 415 737 424 732 432 815 433 880 440 950 436 985 443 1040 450 1090 465 1130 484 1152 507 1170 552 1220 594 1260 624 1255 655 1232 688 1212 704 1208 730 1213 741 1165 835 1138 852 1130 863 1100 875 1060 883 1020 879 1037 865 1005 868 982 857 974 822 988 808 970 770 960 762 950 745 930 715 920 688 895 668 860 652 795 640 750 652 740 665 710 680 685 698 645 704 635 700 628 710 595 706 550 685 515 625 475 590 440 578 385 571 372 554 345 552 320 567 290 590 265 605 240 600 215 585 190 565 150 550 122 539 119 522 108 524 96 510Z"/>
          <path vector-effect="non-scaling-stroke" d="M85 584L140 568 155 570 190 603 240 631 300 629 320 600 340 594 360 597 385 590 420 595 450 610 463 630 468 657 490 670 516 695 518 708 530 709 565 738 620 749 660 745 675 737 715 725 750 706 765 708 780 700 820 690 850 696 895 737 907 780 937 838V860L920 883 895 895 870 890 855 887 835 867 760 870 650 880 630 886 590 880 570 882 500 874 440 858 435 850 393 828 370 795 345 770 338 755 310 735 305 720 282 708 275 693 258 682 266 674 260 680 245 668 213 652 185 632 150 625 100 600Z"/>
          <path vector-effect="non-scaling-stroke" d="M57 466L64 475 72 505 90 525 100 557 66 562 73 556 72 541 57 539Z"/>
          <path vector-effect="non-scaling-stroke" d="M57 616L120 650 148 653 180 677 240 713 275 748 325 818 350 868 385 895 420 920 450 930 490 929 590 952 622 972 640 970 670 987 705 1020 740 1023 785 1047 815 1075 820 1088 855 1098 885 1118 905 1119 1000 1154 1037 1175 1090 1177 1128 1192 1110 1203 1115 1208 1133 1202 1140 1224 1115 1255 1097 1253 1112 1260 1104 1290 1078 1292V1296L1102 1297 1078 1299V1303L1104 1303 1102 1333 1115 1360 1128 1398 1110 1406 1122 1412 1118 1428 1128 1437 1133 1470V1490L1141 1510 1139 1524H57Z"/>
          <path vector-effect="non-scaling-stroke" d="M1168 1524V1440L1160 1390 1158 1358 1148 1340 1142 1300 1148 1280 1175 1267 1215 1262 1260 1256 1330 1262 1333 1273 1388 1269 1393 1253 1435 1246 1450 1252 1455 1245 1490 1242 1500 1249 1540 1258 1545 1266 1590 1270 1610 1263 1625 1256 1665 1250 1685 1240 1720 1228 1755 1210 1820 1207 1822 1214 1824 1206 1890 1203 1905 1197 1940 1202 1943 1192 1950 1204 1972 1203 1958 1190 1990 1190 1993 1178 1995 1187 2032 1170 2032 1189 2042 1190 2040 1163 2060 1158 2090 1136 2115 1133 2135 1117 2168 1115 2192 1137 2175 1128 2180 1117 2205 1100 2250 1083 2363 1058 2383 1083 2408 1092 2400 1075 2440 1070 2460 1075 2475 1091 2527 1083 2524 1067 2529 1085 2545 1078 2583 1084V1102L2586 1084 2624 1087V1524Z"/>
          <path vector-effect="non-scaling-stroke" d="M639 935L655 925 740 920 805 927 875 923 905 937 925 933 950 942 957 930 1010 955 1062 985 1065 1005 1085 1010 1105 1018 1107 1028 1138 1045 1147 1066 1183 1077V1092L1160 1103 1140 1093V1103L1075 1104 990 1096 956 1083 967 1064 956 1064 955 1074 922 1068 918 1052 932 1048 915 1060 880 1055 845 1041 810 1007 705 965 698 970 660 957Z"/>
          <path vector-effect="non-scaling-stroke" d="M768 392L850 391 854 402 845 409H775L768 402ZM977 416L990 409 1030 411 1048 424 1040 429 990 425ZM1177 461L1230 459 1270 472 1330 510 1333 524 1320 530 1288 526 1295 536 1375 568 1380 580 1390 592 1330 575 1270 543 1220 505Z"/>
          <path vector-effect="non-scaling-stroke" d="M1180 1166L1192 1152 1270 1145 1303 1147 1323 1168 1318 1175 1278 1177 1268 1187 1217 1189 1195 1177Z"/>
          <path vector-effect="non-scaling-stroke" d="M1525 1117L1548 1105 1650 1077 1680 1066 1697 1055 1700 1044 1720 1033 1767 1040 1772 1050 1800 1056 1835 1054 1862 1077 1845 1086 1850 1091 1863 1083 1878 1060 1910 1064 1915 1071 1950 1069 1955 1077 1925 1098 1932 1133 1880 1137 1865 1133 1830 1150 1785 1169 1735 1176 1700 1150 1697 1159 1585 1151 1560 1137 1538 1132ZM2189 864L2215 852 2248 846V860L2308 888V894L2280 888 2260 892 2248 904 2230 905 2218 895 2190 902 2204 877Z"/>
          <path vector-effect="non-scaling-stroke" fill="none" d="M1769 593L1810 604 1878 616 1880 622 1866 632 1870 640 1900 647 1926 632 1920 668 1930 640 1935 653 1965 652 1970 637 1995 648 1989 684 2000 648 2010 644 2032 651M2600 458h5"/>
        </g>
      </svg>
    </div>
  </section>
</main>

<footer class="h-[44px] shrink-0 flex items-center pl-[7px] pr-[10px] font-['Liberation_Mono',monospace] text-[16px]">
  <label class="w-[425px] h-8 flex items-center gap-[11px] pl-3 bg-white border-2 border-[#b5b5b5] rounded">
    <svg class="w-[18px] h-5" viewBox="0 0 18 20" fill="none" stroke="#888" stroke-width="1.800"><circle cx="7.500" cy="8" r="6.500"/><path d="M12 13l5 6"/></svg>
    <input type="text" placeholder="Type to locate (Ctrl+K)" aria-label="Locator" class="flex-1 text-[17px] outline-none placeholder:text-[#808080]">
  </label>
  <label for="coord" class="ml-auto mr-[6px]">Coordinate</label>
  <input id="coord" value="24.4308° , 117.92°" class="w-[215px] h-8 px-[11px] bg-white border-2 border-[#b5b5b5] rounded">
  <button class="ml-[6px] mr-2" aria-label="Toggle extents"><svg class="w-6 h-6" viewBox="0 0 24 24"><ellipse cx="16" cy="17" rx="6" ry="6" fill="#c9a9a9"/><ellipse cx="8" cy="8" rx="5" ry="7" fill="#fff" stroke="#000" stroke-width="2" transform="rotate(-30 8 8)"/><path d="M6 4l4 9M9 3l3 9M2 17l4-3M14 4l8-3M16 7l5-3" stroke="#000" stroke-width="1.800"/><circle cx="14" cy="17" r="5.500" fill="#fff" stroke="#000" stroke-width="2"/><circle cx="14" cy="17" r="1.700"/></svg></button>
  <label for="scale" class="ml-[13px] mr-[6px]">Scale</label>
  <div class="w-[137px] h-8 flex bg-white border-2 border-[#b5b5b5] rounded relative">
    <select id="scale" class="appearance-none w-full pl-[5px]"><option>1:129186</option></select>
    <span class="absolute right-0 inset-y-0 w-[29px] grid place-items-center border-l border-[#ddd] bg-[#f6f6f6] pointer-events-none"><svg class="w-3 h-[7px]" viewBox="0 0 12 7"><path d="M0 0h12L6 7z" fill="#555"/></svg></span>
  </div>
  <button class="ml-[19px] mr-[13px]" aria-label="Lock scale"><svg class="w-[18px] h-6" viewBox="0 0 18 24"><path d="M4 12V7q0-5 5-5t5 5v5" fill="none" stroke="#888" stroke-width="2.500"/><rect y="11" width="18" height="12" rx="1.500" fill="#666"/></svg></button>
  <label for="mag" class="mr-2">Magnifier</label>
  <div class="w-[142px] h-8 flex bg-white border-2 border-[#b5b5b5] rounded"><input id="mag" value="100%" class="flex-1 min-w-0 pl-[5px]"><span class="w-[21px] border-l-2 border-[#b5b5b5] bg-[#f6f6f6] grid place-items-center"><svg class="w-3 h-5" viewBox="0 0 12 20"><path d="M0 7h12L6 0zM0 13h12l-6 7z" fill="#555"/></svg></span></div>
  <label for="rot" class="ml-[13px] mr-[14px]">Rotation</label>
  <div class="w-[142px] h-[30px] flex bg-white border-2 border-[#b5b5b5] rounded"><input id="rot" value="0.0 °" class="flex-1 min-w-0 pl-[5px]"><span class="w-[21px] border-l-2 border-[#b5b5b5] bg-[#f6f6f6] grid place-items-center"><svg class="w-3 h-5" viewBox="0 0 12 20"><path d="M0 7h12L6 0zM0 13h12l-6 7z" fill="#555"/></svg></span></div>
  <label class="ml-[9px] flex items-center gap-2">
    <span class="relative grid place-items-center"><input type="checkbox" checked class="appearance-none w-[21px] h-[21px] bg-white border-2 border-[#c4c4c4]"><svg class="absolute w-3 h-[14px]" viewBox="0 0 12 14"><path d="M1 7l3 5L11 1" fill="none" stroke="#000" stroke-width="2.500"/></svg></span>
    Render
  </label>
  <button class="ml-[23px] flex items-center gap-[3px]"><svg class="w-6 h-6" viewBox="0 0 24 24" fill="none" stroke="#666" stroke-width="1.400"><circle cx="12" cy="12" r="10.500" fill="#ddd"/><path d="M1 9h22M1 13h22M4 17.500h16M12 1v22M8 2q-6 10 0 20M16 2q6 10 0 20"/><path d="M6 2h12l3 4H3z" fill="#888"/></svg>EPSG:4326</button>
  <button class="ml-12" aria-label="Messages"><svg class="w-6 h-6" viewBox="0 0 24 24"><path d="M12 1a11 10 0 100 20l4-.500 6 3.500-2-6A10.500 10.500 0 0012 1z" fill="#666"/><path d="M5.500 9.500h3v3h-3zM10.500 9.500h3v3h-3zM15.500 9.500h3v3h-3z" fill="#fff"/></svg></button>
</footer>
<div class="h-[10px] shrink-0 flex justify-center gap-2 pt-1 pl-[663px] bg-[#1c1c1c] border-t-2 border-[#3c3c3c]">
  <i class="w-[58px] h-1 rounded-t bg-[#333]"></i><i class="w-[58px] h-1 rounded-t bg-[#4a2222]"></i>
</div>

<script>
const $ = s => document.querySelector(s);
const put = (el, html) => el.insertAdjacentHTML('beforeend', html);

// Menu entries; the underscore precedes the accelerator letter
['Pro_ject','_Edit','_View','_Layer','_Settings','_Plugins','Vect_or','_Raster','_Database','_Web','_Mesh','Pro_cessing','_Help'].forEach(m =>
  put($('#menu'), `<button class="px-[11px] border-b-2 border-[#d6d6d6] pb-[2px]">${m.replace(/_(.)/, '<u class="underline-offset-2">$1</u>')}</button>`));
put($('#menu'), '<div class="flex-1 border-b-2 border-[#d6d6d6]"></div>');

const icon = (n, dim) => `<svg class="w-9 h-9 ${dim ? 'opacity-40' : ''}" ><use href="#${n}"/></svg>`;
const arrow = dim => `<svg class="w-3 h-[7px] ${dim ? 'opacity-50' : ''}" viewBox="0 0 12 7"><path d="M0 0h12L6 7z" fill="#555"/></svg>`;
const grip = cls => `<div class="${cls} flex justify-center items-center gap-[3px]"><i class="h-8 border-l-2 border-dotted border-[#c0c0c0]"></i><i class="h-8 border-l-2 border-dotted border-[#c0c0c0]"></i></div>`;
const sep = cls => `<div class="${cls} flex justify-center items-center"><i class="h-7 border-l-2 border-[#d0d0d0]"></i></div>`;
// A leading ~ marks a disabled tool, a trailing + one with a drop-down arrow
const tool = t => {
  const dim = t[0] === '~', n = t.replace(/[~+]/g, '');
  if (t.endsWith('+')) return `<button class="w-[68px] flex items-center pl-[6px] gap-[10px]" aria-label="${n}">${icon(n, dim)}${arrow(dim)}</button>`;
  if (n === 'hand') return `<button class="flex-1 my-[5px] grid place-items-center rounded bg-[#dcdcdc] border border-[#b0b0b0]" aria-label="${n}">${icon(n, dim)}</button>`;
  return `<button class="flex-1 grid place-items-center" aria-label="${n}">${icon(n, dim)}</button>`;
};
const group = (cls, s) => `<div class="${cls} flex">${s.split(' ').map(tool).join('')}</div>`;

put($('#bar1'), [
  grip('w-[19px]'), group('w-[297px]', 'new open save layout layoutmgr style'),
  grip('w-6 pl-1'), group('w-[792px]', 'hand panarrows zin zout zfull zsel zlayer z11 zlast ~znext map2d map3d bmnew bm clock refresh'),
  grip('w-[25px] pl-1'), group('w-[272px]', '~select+ ~selform+ desel+ selloc+'),
  grip('w-5 pl-1'), group('w-[198px]', 'ident ~abacus gear sigma'),
  group('w-[136px]', '~table+ ruler+'), group('w-[49px]', 'tip'), group('w-[68px]', '~gearplay+')
].join(''));
put($('#bar2'), [
  grip('w-[19px]'), group('w-[346px]', 'dsm gpkgnew shpnew feathernew chipnew mesh virt'),
  grip('w-[26px] pl-1'), group('w-[148px]', '~pencils ~pencil ~savedit'),
  group('w-[68px]', '~line+'), group('w-[49px]', '~pts'), group('w-[68px]', '~vertex+'),
  group('w-[346px]', '~modattr ~del ~cut ~copy ~paste ~undo ~redo'),
  grip('w-[22px] pl-1'), group('w-[99px]', '~lab ~diag'), sep('w-3'), group('w-[98px]', 'labpin labred'),
  sep('w-[11px]'), group('w-[247px]', '~labpin2 ~labeye ~labmove ~labrot ~labedit'),
  grip('w-[25px] pl-1'), group('w-[50px]', 'search'), grip('w-6 pl-1'), group('w-[49px]', 'python'),
  grip('w-6 pl-1'), group('w-[49px]', 'help'), grip('w-8')
].join(''));

document.querySelectorAll('[data-title]').forEach(e => put(e, `<h2 class="flex-1">${e.dataset.title}</h2>
  <button aria-label="Float"><svg class="w-[17px] h-[17px]" viewBox="0 0 17 17" fill="none" stroke="#666"><rect x=".7" y=".7" width="15.600" height="15.600" rx="2.500" stroke-width="1.300"/><path d="M3.500 7h6v6.500h-6zM6.500 7V3.500h6.500V10H9.500"/></svg></button>
  <button class="mr-[2px]" aria-label="Close"><svg class="w-[17px] h-[17px]" viewBox="0 0 17 17" fill="none" stroke="#666"><rect x=".7" y=".7" width="15.600" height="15.600" rx="2.500" stroke-width="1.300"/><path d="M4.500 4l8 9M12.500 4l-8 9" stroke="#444" stroke-width="3"/></svg></button>`));

const small = (n, cls) => `<button class="${cls}" aria-label="${n}"><svg class="w-6 h-6"><use href="#${n}"/></svg></button>`;
const corner = cls => `<span class="${cls} mt-8"><svg class="w-[9px] h-[6px]" viewBox="0 0 12 7"><path d="M0 0h12L6 7z" fill="#555"/></svg></span>`;
document.querySelectorAll('[data-tools]').forEach(e => e.dataset.tools.split(' ').forEach(n => put(e, small(n, ''))));
put($('#layertools'), [
  small('brush', 'mr-[14px]'), small('group', 'mr-[18px]'),
  small('eye', ''), corner('mr-[17px]'),
  small('filter', ''), corner('mr-[17px]'),
  small('expr', 'opacity-50 mr-[14px]'), `<span class="flex mr-3">${arrow(true)}</span>`,
  small('expand', 'mr-[13px]'), small('collapse', 'mr-[13px]'), small('remove', '')
].join(''));

[['star','Favorites'],['bm','Spatial Bookmarks',1],['home','Home',1],['folder','C:\\ (System)',1],['folder','D:\\ (新加卷)',1],['gpkg','GeoPackage'],['feather','SpatiaLite'],['pg','PostgreSQL'],['hana','SAP HANA'],['mssql','MS SQL Server'],['oracle','Oracle'],['wms','WMS/WMTS']].forEach(([n, t, kids]) =>
  put($('#browser'), `<li class="h-[27px] flex items-center pl-[10px]"><svg class="w-[7px] h-3 mr-3" viewBox="0 0 7 12">${kids ? '<path d="M0 0v12l7-6z" fill="#555"/>' : ''}</svg><svg class="w-6 h-6 mr-[9px]"><use href="#${n}"/></svg>${t}</li>`));

[['WRECKS','#d6487b'],['UWTROC','#8d72b3'],['PYLONS','#e0677f'],['LNDRGN','#cfa82f'],['LIGHTS','#8d72b3'],['TS_FEB','#cfa82f'],['TOPMAR','#78ad61'],['SOUNDG','#8d5431'],['GATCON','#e06a85'],['BOYSPP','#78ad61'],['CTNARE','#8d5431'],['SISTAW','#b0434a'],['SEAARE','#e06a85'],['OFSPLF','#78ad61'],['SBDARE','#cfa82f'],['BUISGL','#e06a85'],['BOYLAT','#fff']].forEach(([t, c]) =>
  put($('#layers'), `<li><label class="h-[27px] flex items-center pl-[35px] text-[20px] font-bold italic text-[#808080]"><input type="checkbox" class="appearance-none w-[21px] h-5 bg-white border-2 border-[#c4c4c4] mr-4"><svg class="w-2 h-2 mr-[19px]" viewBox="0 0 8 8"><circle cx="4" cy="4" r="3.500" fill="${c}" stroke="#555"/></svg>CN466121 — ${t}</label></li>`));
</script>
</body>
</html>
